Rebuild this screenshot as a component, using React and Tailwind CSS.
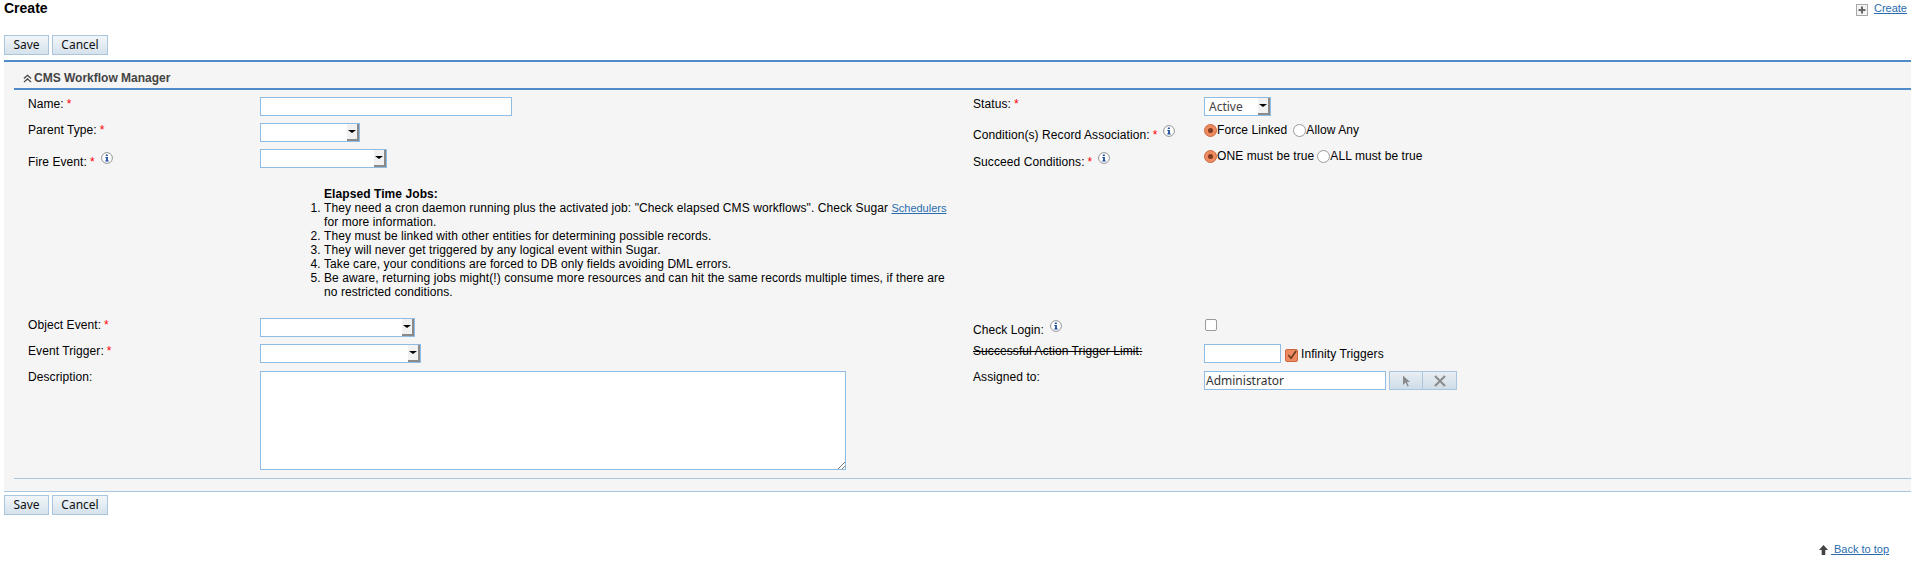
function Req() {
  return <span className="ml-[3px] text-[#ff0000]">*</span>;
}

function Info() {
  return (
    <svg className="ml-[6px] inline-block h-3 w-3 align-[2px]" viewBox="0 0 12 12">
      <circle cx="6" cy="6" r="5.4" fill="#fff" stroke="#8a8a8a" strokeWidth="0.9" />
      <path d="M4.8 2.4h2v1.5h-2zM4.3 5h2.6v3.4h.9v1H4.2v-1h.9V6h-.8z" fill="#1f4fa0" />
    </svg>
  );
}

function Btn({ label, className }) {
  return (
    <button
      type="button"
      className={`h-[20px] border border-[#a9c6de] bg-gradient-to-b from-[#f2f6fa] to-[#d5e2ec] font-['Noto_Sans'] text-[12px] leading-none tracking-normal text-[#111] ${className}`}
    >
      {label}
    </button>
  );
}

function Buttons() {
  return (
    <div className="flex gap-[3px]">
      <Btn label="Save" className="w-[45px]" />
      <Btn label="Cancel" className="w-[56px]" />
    </div>
  );
}

function Select({ width, value }) {
  return (
    <div className={`flex h-[19px] items-stretch border border-[#8fbce4] bg-white ${width}`}>
      <span className="flex-1 pl-1 font-['Noto_Sans'] text-[12px] leading-[18px] tracking-normal text-[#444]">{value}</span>
      <span className="flex w-[12px] items-center justify-center border-r-2 border-b-2 border-[#8a8a8a] bg-[#f1f1f1]">
        <span className="h-0 w-0 border-x-[4px] border-t-[3px] border-x-transparent border-t-black" />
      </span>
    </div>
  );
}

function Radio({ checked, label, className }) {
  return (
    <span className={`inline-flex items-center ${className || ""}`}>
      {checked ? (
        <span className="flex h-[13px] w-[13px] items-center justify-center rounded-full border border-[#c9693f] bg-[#ee8a60]">
          <span className="h-[5px] w-[5px] rounded-full bg-[#7d3a1e]" />
        </span>
      ) : (
        <span className="h-[13px] w-[13px] rounded-full border border-[#9a9a9a] bg-white" />
      )}
      {label}
    </span>
  );
}

function Input({ className, value }) {
  return (
    <input
      readOnly
      value={value || ""}
      className={`h-[19px] border border-[#8fbce4] bg-white px-[1px] font-['Noto_Sans'] text-[12px] tracking-normal text-[#333] outline-none ${className}`}
    />
  );
}

export default function App() {
  return (
    <div className="h-[563px] bg-white font-['Liberation_Sans',sans-serif] text-[12px] leading-[14px] tracking-[0.08px] text-black">
      <div className="flex h-[35px] justify-between pl-1">
        <h1 className="text-[14px] leading-[16px] font-bold tracking-normal">Create</h1>
        <a href="#" className="mr-1 flex items-start pt-[2px] text-[11px] leading-[13px] tracking-normal text-[#2a6cb0] underline">
          <svg className="mt-[2px] mr-[6px] h-3 w-3" viewBox="0 0 12 12">
            <rect x="0.5" y="0.5" width="11" height="11" fill="#f4f4f4" stroke="#a8a8a8" />
            <path d="M5 2.5h2V5h2.5v2H7v2.5H5V7H2.5V5H5z" fill="#666" />
          </svg>
          Create
        </a>
      </div>

      <div className="pl-1">
        <Buttons />
        <div className="mt-[5px] border-t-2 border-b border-t-[#4f8ac9] border-b-[#a9c6de] bg-[#f5f5f5] pl-[10px]">
          <div className="flex h-[28px] items-end border-b-2 border-[#4f8ac9] pb-[3px] pl-[9px]">
            <svg className="mr-[2px] mb-[2px] h-[9px] w-[9px]" viewBox="0 0 10 10" fill="none" stroke="#444" strokeWidth="1.4">
              <path d="M1 5l4-3.5L9 5M1 9l4-3.5L9 9" />
            </svg>
            <span className="text-[12px] leading-[14px] font-bold tracking-normal text-[#444]">CMS Workflow Manager</span>
          </div>

          <div className="grid grid-cols-[232px_713px_231px_1fr] pt-[7px] pl-[14px]">
            <div className="h-[26px]">Name:<Req /></div>
            <div><Input className="w-[252px]" /></div>
            <div>Status:<Req /></div>
            <div><Select width="w-[67px]" value="Active" /></div>

            <div className="h-[26px]">Parent Type:<Req /></div>
            <div><Select width="w-[100px]" /></div>
            <div className="pt-[2px]">Condition(s) Record Association:<Req /><Info /></div>
            <div className="flex items-start">
              <Radio checked label="Force Linked" />
              <Radio label="Allow Any" className="ml-[6px]" />
            </div>

            <div className="h-[26px] pt-[3px]">Fire Event:<Req /><Info /></div>
            <div><Select width="w-[127px]" /></div>
            <div className="pt-[3px]">Succeed Conditions:<Req /><Info /></div>
            <div className="flex items-start">
              <Radio checked label="ONE must be true" />
              <Radio label="ALL must be true" className="ml-[3px]" />
            </div>

            <div />
            <div className="col-span-3 h-[143px] pt-[12px] pl-[64px]">
              <div className="w-[630px]">
                <strong className="font-bold">Elapsed Time Jobs:</strong>
                <ol className="-ml-[1px] list-decimal pl-[1px]">
                  <li>
                    They need a cron daemon running plus the activated job: "Check elapsed CMS workflows". Check Sugar{" "}
                    <a href="#" className="text-[11px] tracking-normal text-[#2a6cb0] underline">Schedulers</a> for more information.
                  </li>
                  <li>They must be linked with other entities for determining possible records.</li>
                  <li>They will never get triggered by any logical event within Sugar.</li>
                  <li>Take care, your conditions are forced to DB only fields avoiding DML errors.</li>
                  <li>Be aware, returning jobs might(!) consume more resources and can hit the same records multiple times, if there are no restricted conditions.</li>
                </ol>
              </div>
            </div>

            <div className="h-[26px]">Object Event:<Req /></div>
            <div><Select width="w-[155px]" /></div>
            <div className="pt-[2px]">Check Login:<Info /></div>
            <div className="pt-[1px] pl-[1px]">
              <span className="block h-[12px] w-[12px] rounded-[2px] border border-[#9a9a9a] bg-white" />
            </div>

            <div className="h-[27px]">Event Trigger:<Req /></div>
            <div><Select width="w-[161px]" /></div>
            <div className="line-through">Successful Action Trigger Limit:</div>
            <div className="flex items-start">
              <Input className="w-[77px]" />
              <span className="mt-[5px] mr-[3px] ml-[4px] flex h-[13px] w-[13px] items-center justify-center rounded-[2px] border border-[#c9693f] bg-[#ee8a60]">
                <svg className="h-[13px] w-[13px]" viewBox="0 0 12 12" fill="none" stroke="#6b3a20" strokeWidth="1.8">
                  <path d="M2.5 5.5l3 3.5L11 1" />
                </svg>
              </span>
              <span className="pt-[3px]">Infinity Triggers</span>
            </div>

            <div className="-mt-[1px]">Description:</div>
            <div>
              <div className="relative h-[99px] w-[586px] border border-[#8fbce4] bg-white">
                <svg className="absolute right-0 bottom-0 h-[8px] w-[8px]" viewBox="0 0 8 8" stroke="#777">
                  <path d="M1 8l7-7M5 8l3-3" />
                </svg>
              </div>
            </div>
            <div className="-mt-[1px]">Assigned to:</div>
            <div className="flex items-start">
              <Input className="w-[182px]" value="Administrator" />
              <span className="ml-[3px] flex h-[19px] w-[34px] items-center justify-center border border-[#a9c6de] bg-gradient-to-b from-[#e8eef3] to-[#cfdde8]">
                <svg className="h-[12px] w-[12px]" viewBox="0 0 12 12" fill="#8a8a8a">
                  <path d="M3 0.5l7 6.5H7l1.8 4-1.4.6L5.7 7.6 3 10z" />
                </svg>
              </span>
              <span className="flex h-[19px] w-[34px] items-center justify-center border border-l-0 border-[#a9c6de] bg-gradient-to-b from-[#e8eef3] to-[#cfdde8]">
                <svg className="h-[12px] w-[12px]" viewBox="0 0 12 12" stroke="#8a8a8a" strokeWidth="2">
                  <path d="M1 1l10 10M11 1L1 11" />
                </svg>
              </span>
            </div>
          </div>

          <div className="mt-[8px] border-t border-[#a9c6de] pb-[12px]" />
        </div>
        <div className="mt-[3px]">
          <Buttons />
        </div>
      </div>

      <div className="mt-[28px] flex items-center justify-end pr-[22px]">
        <svg className="mr-[3px] h-[10px] w-[9px]" viewBox="0 0 9 10" fill="#444">
          <path d="M4.5 0L9 5H6.3V10H2.7V5H0z" />
        </svg>
        <a href="#" className="text-[11px] leading-[13px] tracking-normal whitespace-pre text-[#2a6cb0] underline">
          {" Back to top"}
        </a>
      </div>
    </div>
  );
}
